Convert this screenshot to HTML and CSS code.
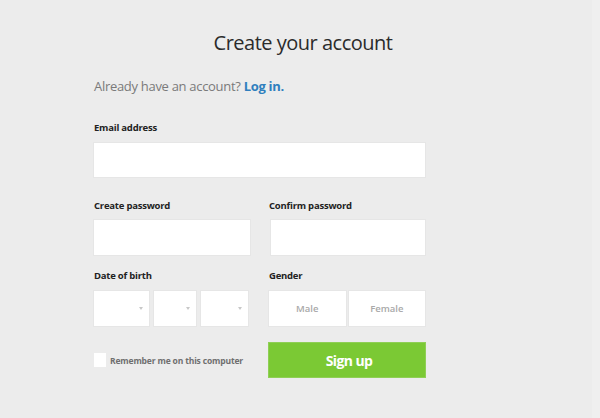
FILE: index.html
```html
<!DOCTYPE html>
<html>
<head>
<meta charset="utf-8">
<link rel="stylesheet" href="styles.css">
</head>
<body>
<div class="page">
  <h1 class="title">Create your account</h1>
  <div class="form">
    <p class="login">Already have an account? <a href="#" class="login-link">Log in.</a></p>
    <div class="field field-email">
      <label class="label">Email address</label>
      <div class="input"></div>
    </div>
    <div class="row row-pass">
      <div class="field">
        <label class="label">Create password</label>
        <div class="input"></div>
      </div>
      <div class="field field-right">
        <label class="label">Confirm password</label>
        <div class="input"></div>
      </div>
    </div>
    <div class="row row-dob">
      <div class="field">
        <label class="label">Date of birth</label>
        <div class="dob">
          <div class="input select"><span class="caret"></span></div>
          <div class="input select"><span class="caret"></span></div>
          <div class="input select"><span class="caret"></span></div>
        </div>
      </div>
      <div class="field">
        <label class="label">Gender</label>
        <div class="gender">
          <div class="input opt">Male</div>
          <div class="input opt">Female</div>
        </div>
      </div>
    </div>
    <div class="row row-submit">
      <label class="remember"><span class="checkbox"></span>Remember me on this computer</label>
      <button class="signup">Sign up</button>
    </div>
  </div>
</div>
</body>
</html>
```

FILE: styles.css
```css
* { box-sizing: border-box; }
html, body { margin: 0; padding: 0; }
body {
  background: #ececec;
  font-family: "Open Sans", "DejaVu Sans", sans-serif;
  width: 600px;
  height: 418px;
  overflow: hidden;
}
.page {
  height: 418px;
  padding-top: 31px;
  border-right: 8px solid #efefef;
}
.title {
  margin: 0 0 0 14px;
  text-align: center;
  font-size: 20px;
  line-height: 24px;
  font-weight: 400;
  color: #2b2b2b;
  letter-spacing: -0.5px;
}
.form {
  width: 331px;
  margin-left: 94px;
}
.login {
  margin: 21px 0 0;
  font-size: 13px;
  line-height: 20px;
  color: #7a7a7a;
  letter-spacing: -0.3px;
}
.login-link {
  color: #2f7fbe;
  font-weight: 700;
  text-decoration: none;
}
.label {
  display: block;
  font-size: 9.5px;
  line-height: 14px;
  font-weight: 700;
  color: #222;
  margin-bottom: 8px;
  letter-spacing: -0.22px;
}
.field-email { margin-top: 25px; }
.field-email .input { height: 34px; }
.input {
  background: #fff;
  height: 35px;
  box-shadow: 0 0 0 1px #e6e6e6;
}
.row {
  display: grid;
  grid-template-columns: 1fr 1fr;
  column-gap: 19px;
}
.row-pass { margin-top: 22px; }
.row-pass .label { margin-bottom: 7px; }
.field-right .input { margin-left: 2px; }
.row-dob { margin-top: 14px; }
.dob {
  display: grid;
  grid-template-columns: 55px 42px 1fr;
  column-gap: 5px;
  margin-right: 2px;
}
.select {
  position: relative;
}
.caret {
  position: absolute;
  right: 6px;
  top: 16px;
  width: 0;
  height: 0;
  border-left: 2.5px solid transparent;
  border-right: 2.5px solid transparent;
  border-top: 3px solid #c8c8c8;
}
.gender {
  display: grid;
  grid-template-columns: 1fr 1fr;
  column-gap: 3px;
}
.opt {
  display: flex;
  align-items: center;
  justify-content: center;
  font-size: 9.5px;
  font-weight: 600;
  color: #a9a9a9;
}
.row-submit {
  margin-top: 17px;
  align-items: center;
}
.remember {
  display: flex;
  align-items: center;
  font-size: 8.5px;
  font-weight: 700;
  color: #6f6f6f;
  letter-spacing: -0.15px;
}
.checkbox {
  width: 12px;
  height: 14px;
  background: #fff;
  margin-right: 4px;
}
.signup {
  height: 34px;
  border: none;
  background: #7bc934;
  box-shadow: 0 0 0 1px #8fcf55;
  color: #fff;
  font-family: "Open Sans", "DejaVu Sans", sans-serif;
  font-size: 14px;
  font-weight: 700;
  letter-spacing: -0.6px;
  padding: 0 0 0 4px;
}
```
